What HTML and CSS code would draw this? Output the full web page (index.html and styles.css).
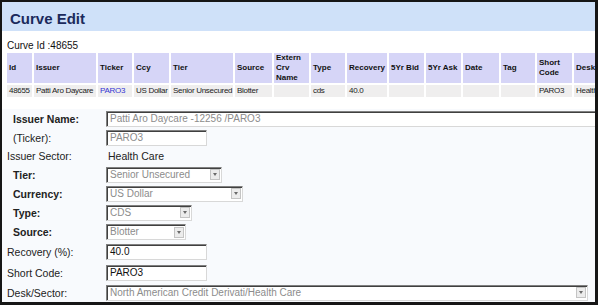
FILE: index.html
```html
<!DOCTYPE html>
<html lang="en">
<head>
  <meta charset="UTF-8" />
  <title>Curve Edit</title>
  <link rel="stylesheet" href="styles.css">
</head>
<body>

  <div class="frame">
    <div class="title">Curve Edit</div>
    <div class="curve-id">Curve Id :48655</div>

    <table class="grid">
      <colgroup>
        <col style="width:25px"><col style="width:62px"><col style="width:34px">
        <col style="width:35px"><col style="width:62px"><col style="width:37px">
        <col style="width:35px"><col style="width:34px"><col style="width:40px">
        <col style="width:35px"><col style="width:35px"><col style="width:36px">
        <col style="width:34px"><col style="width:35px"><col style="width:60px">
      </colgroup>
      <tr>
        <th>Id</th><th>Issuer</th><th>Ticker</th><th>Ccy</th><th>Tier</th>
        <th>Source</th><th>Extern Crv Name</th><th>Type</th><th>Recovery</th>
        <th>5Yr Bid</th><th>5Yr Ask</th><th>Date</th><th>Tag</th>
        <th>Short Code</th><th>Desk/Sector</th>
      </tr>
      <tr>
        <td>48655</td><td>Patti Aro Daycare</td><td class="link">PARO3</td>
        <td>US Dollar</td><td>Senior Unsecured</td><td>Blotter</td><td></td>
        <td>cds</td><td>40.0</td><td></td><td></td><td></td><td></td>
        <td>PARO3</td><td>Health Care</td>
      </tr>
    </table>

    <div class="form">
      <label class="b">Issuer Name:</label>
      <div class="box w-issuer">Patti Aro Daycare -12256 /PARO3</div>

      <label class="ind">(Ticker):</label>
      <div class="box w-short">PARO3</div>

      <label>Issuer Sector:</label>
      <div class="plain">Health Care</div>

      <label class="b">Tier:</label>
      <div class="box sel w-tier"><span class="txt">Senior Unsecured</span><span class="btn"></span></div>

      <label class="b">Currency:</label>
      <div class="box sel w-ccy"><span class="txt">US Dollar</span><span class="btn"></span></div>

      <label class="b">Type:</label>
      <div class="box sel w-type"><span class="txt">CDS</span><span class="btn"></span></div>

      <label class="b">Source:</label>
      <div class="box sel w-source"><span class="txt">Blotter</span><span class="btn"></span></div>

      <label>Recovery (%):</label>
      <div class="box on w-short">40.0</div>

      <label>Short Code:</label>
      <div class="box on w-short">PARO3</div>

      <label>Desk/Sector:</label>
      <div class="box sel w-desk"><span class="txt">North American Credit Derivati/Health Care</span><span class="btn"></span></div>
    </div>
  </div>

</body>
</html>
```
FILE: styles.css
```css
* { margin: 0; padding: 0; box-sizing: border-box; }
body {
  font-family: 'Liberation Sans', Arial, sans-serif;
  background: #fff;
  color: #222;
}
.frame {
  width: 598px;
  height: 305px;
  border: 2px solid #161616;
  border-right-width: 3px;
  border-bottom-width: 3px;
  overflow: hidden;
}
.title {
  height: 29px;
  padding: 8px 0 0 8px;
  background: #cfe1f9;
  color: #1b2a5c;
  font-size: 15px;
  font-weight: bold;
  line-height: 17px;
}
.curve-id {
  margin: 9px 0 0 5px;
  font-size: 10px;
  line-height: 11px;
  color: #111;
}

/* results table */
.grid {
  margin-left: 3px;
  border-spacing: 2px;
  table-layout: fixed;
  width: 631px;
  font-size: 8px;
}
.grid th {
  height: 30px;
  padding: 0 2px;
  background: #d6d5f7;
  text-align: left;
  font-weight: bold;
  line-height: 10px;
  color: #111;
}
.grid td {
  height: 12px;
  padding: 0 2px;
  background: #efeeee;
  line-height: 12px;
  letter-spacing: -0.3px;
  white-space: nowrap;
  overflow: hidden;
  color: #222;
}
.grid .link { color: #3434d4; }

/* edit form */
.form {
  margin-top: 10px;
  padding-left: 5px;
  display: grid;
  grid-template-columns: 99px 1fr;
  grid-template-rows: 19px 19px 18px 19px 19px 19px 20px 20px 21px 19px;
  align-items: center;
  background: #f8fafd;
  font-size: 10.5px;
}
.form label { color: #222; white-space: nowrap; }
.form .b { font-weight: bold; padding-left: 6px; }
.form .ind { padding-left: 6px; }
.plain { padding-left: 2px; font-size: 10.5px; color: #222; }

.box {
  height: 16px;
  padding: 0 2px 0 3px;
  border: 1px solid;
  border-color: #808080 #d8d8d8 #d8d8d8 #808080;
  box-shadow: inset 1px 1px 0 #404040;
  background: #fff;
  font-size: 10px;
  line-height: 14px;
  color: #8c8c8c;
  white-space: nowrap;
  overflow: hidden;
}
.box.on { color: #111; }
.sel { display: flex; align-items: center; padding-right: 1px; }
.sel .txt { flex: 1; overflow: hidden; }
.sel .btn {
  position: relative;
  width: 10px;
  height: 11px;
  background: #ececec;
  border: 1px solid #c4c4c4;
}
.sel .btn::after {
  content: '';
  position: absolute;
  left: 2px;
  top: 3px;
  border-left: 2px solid transparent;
  border-right: 2px solid transparent;
  border-top: 3px solid #6a6a6a;
}

.w-issuer { width: 495px; }
.w-short { width: 101px; }
.w-tier { width: 116px; }
.w-ccy { width: 137px; }
.w-type { width: 86px; }
.w-source { width: 80px; }
.w-desk { width: 482px; }
```
